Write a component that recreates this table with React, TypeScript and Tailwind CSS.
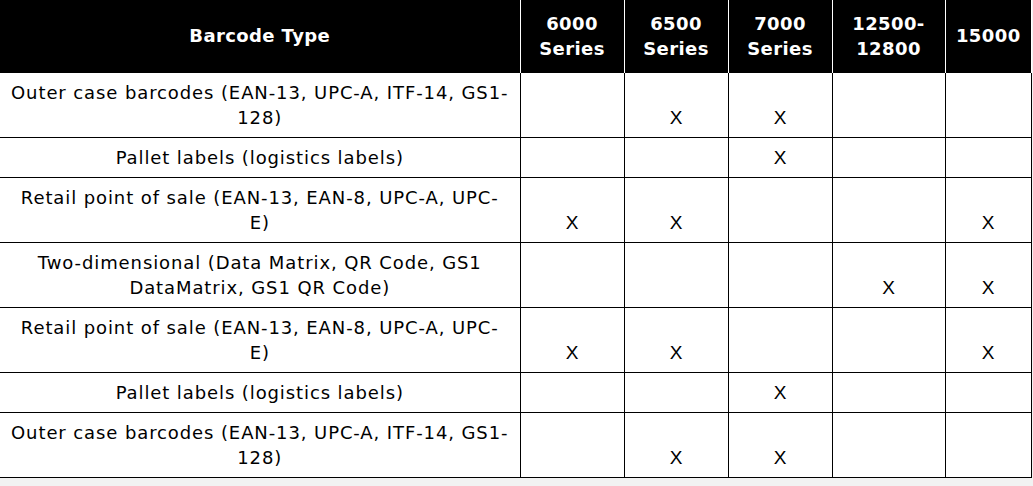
import React from "react";

type Row = { label: React.ReactNode; marks: boolean[] };

const rows: Row[] = [
  {
    label: (
      <>
        Outer case barcodes (EAN-13, UPC-A, ITF-14, GS1-
        <br />
        128)
      </>
    ),
    marks: [false, true, true, false, false],
  },
  { label: "Pallet labels (logistics labels)", marks: [false, false, true, false, false] },
  {
    label: (
      <>
        Retail point of sale (EAN-13, EAN-8, UPC-A, UPC-
        <br />
        E)
      </>
    ),
    marks: [true, true, false, false, true],
  },
  {
    label: (
      <>
        Two-dimensional (Data Matrix, QR Code, GS1
        <br />
        DataMatrix, GS1 QR Code)
      </>
    ),
    marks: [false, false, false, true, true],
  },
  {
    label: (
      <>
        Retail point of sale (EAN-13, EAN-8, UPC-A, UPC-
        <br />
        E)
      </>
    ),
    marks: [true, true, false, false, true],
  },
  { label: "Pallet labels (logistics labels)", marks: [false, false, true, false, false] },
  {
    label: (
      <>
        Outer case barcodes (EAN-13, UPC-A, ITF-14, GS1-
        <br />
        128)
      </>
    ),
    marks: [false, true, true, false, false],
  },
];

const headers: React.ReactNode[] = [
  <>
    6000
    <br />
    Series
  </>,
  <>
    6500
    <br />
    Series
  </>,
  <>
    7000
    <br />
    Series
  </>,
  <>
    12500-
    <br />
    12800
  </>,
  <>15000</>,
];

export default function App() {
  return (
    <div className="w-[1033px] h-[486px] bg-[#f2f2f2] overflow-hidden">
      <table
        className="table-fixed border-collapse bg-white w-[1031px] text-black"
        style={{ fontFamily: "'DejaVu Sans', Verdana, sans-serif" }}
      >
        <colgroup>
          <col className="w-[520px]" />
          <col className="w-[104px]" />
          <col className="w-[104px]" />
          <col className="w-[104px]" />
          <col className="w-[113px]" />
          <col className="w-[86px]" />
        </colgroup>
        <thead>
          <tr className="h-[73px]">
            <th className="bg-black text-white text-[18px] font-bold leading-[25px] tracking-[0.4px] align-middle text-center pt-0 pb-[2px] px-0">
              Barcode Type
            </th>
            {headers.map((h, i) => (
              <th
                key={i}
                className="bg-black text-white text-[18px] font-bold leading-[25px] tracking-[0.4px] align-middle text-center pt-0 pb-[2px] px-0 border-l border-white"
              >
                {h}
              </th>
            ))}
          </tr>
        </thead>
        <tbody>
          {rows.map((r, ri) => (
            <tr key={ri}>
              <td className="border-b border-black text-center text-[18px] font-normal leading-[25px] tracking-[0.9px] py-[7px] px-0 align-middle whitespace-nowrap">
                {r.label}
              </td>
              {r.marks.map((m, mi) => (
                <td
                  key={mi}
                  className={
                    "border-b border-l border-black text-center align-bottom py-[7px] px-0 leading-[25px] text-[19px] " +
                    (mi === 4 ? "border-r" : "")
                  }
                  style={{ fontFamily: "'Liberation Sans', Arial, sans-serif" }}
                >
                  {m ? "X" : ""}
                </td>
              ))}
            </tr>
          ))}
        </tbody>
      </table>
    </div>
  );
}
